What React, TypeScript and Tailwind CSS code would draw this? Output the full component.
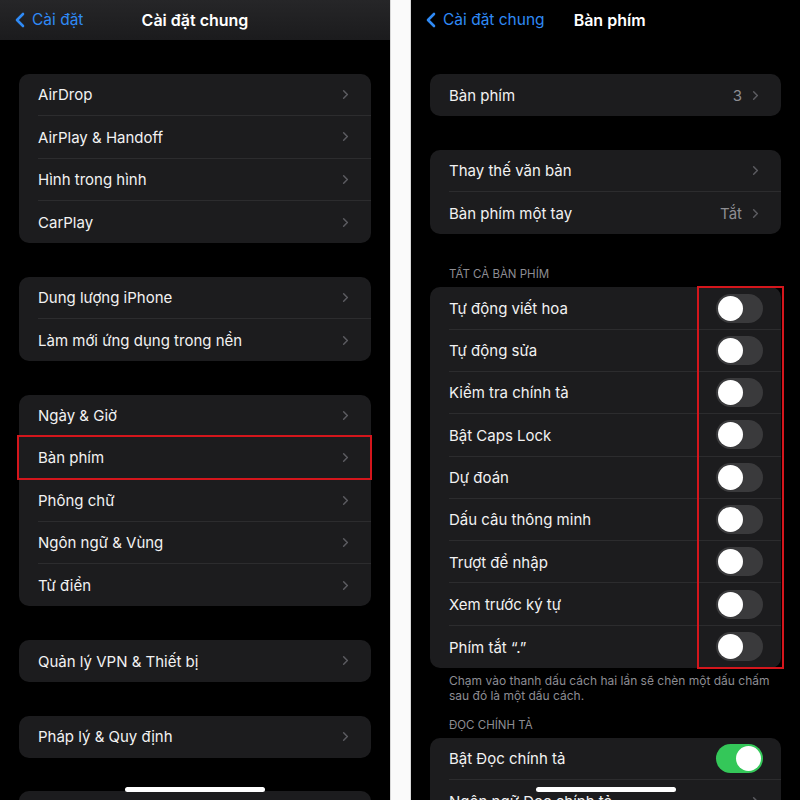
import { ChevronLeft, ChevronRight } from 'lucide-react';

type Row = { label: string; value?: string };

const leftGroups: Row[][] = [
  [{ label: 'AirDrop' }, { label: 'AirPlay & Handoff' }, { label: 'Hình trong hình' }, { label: 'CarPlay' }],
  [{ label: 'Dung lượng iPhone' }, { label: 'Làm mới ứng dụng trong nền' }],
  [
    { label: 'Ngày & Giờ' },
    { label: 'Bàn phím' },
    { label: 'Phông chữ' },
    { label: 'Ngôn ngữ & Vùng' },
    { label: 'Từ điển' },
  ],
  [{ label: 'Quản lý VPN & Thiết bị' }],
  [{ label: 'Pháp lý & Quy định' }],
  [{ label: 'Chuyển hoặc đặt lại iPhone' }],
];

const toggles = [
  'Tự động viết hoa',
  'Tự động sửa',
  'Kiểm tra chính tả',
  'Bật Caps Lock',
  'Dự đoán',
  'Dấu câu thông minh',
  'Trượt để nhập',
  'Xem trước ký tự',
  'Phím tắt “.”',
];

function Chevron() {
  return <ChevronRight size={15} strokeWidth={2.4} className="text-[#5b5b60] shrink-0" />;
}

function NavRow({ row, last }: { row: Row; last: boolean }) {
  return (
    <div className="h-[42.3px] pl-[19px] flex items-center">
      <div
        className={`flex-1 h-full flex items-center pr-[18px] ${last ? '' : 'border-b border-[#2c2c2e]'}`}
      >
        <span className="flex-1 pt-[2px] text-[15px] text-[#f2f2f2]">{row.label}</span>
        {row.value && <span className="pt-[2px] text-[15px] text-[#8e8e93] mr-[6px]">{row.value}</span>}
        <Chevron />
      </div>
    </div>
  );
}

function Toggle({ on }: { on: boolean }) {
  return (
    <div
      className={`w-[47px] h-[29px] rounded-full p-[2px] flex ${
        on ? 'bg-[#34c759] justify-end' : 'bg-[#3a3a3c] justify-start'
      }`}
    >
      <div className="w-[25px] h-[25px] rounded-full bg-white" />
    </div>
  );
}

function ToggleRow({ label, on, last }: { label: string; on: boolean; last: boolean }) {
  return (
    <div className="h-[42.3px] pl-[19px] flex items-center">
      <div
        className={`flex-1 h-full flex items-center pr-[18px] ${last ? '' : 'border-b border-[#2c2c2e]'}`}
      >
        <span className="flex-1 pt-[2px] text-[15px] text-[#f2f2f2]">{label}</span>
        <Toggle on={on} />
      </div>
    </div>
  );
}

function Card({ children }: { children: React.ReactNode }) {
  return <div className="bg-[#1c1c1e] rounded-[10px] overflow-hidden">{children}</div>;
}

function LeftPanel() {
  return (
    <div className="w-[390px] h-full bg-black flex flex-col overflow-hidden">
      <div className="h-[40px] shrink-0 bg-gradient-to-b from-[#262628] to-[#1b1b1d] flex items-center relative">
        <div className="flex items-center pl-[8px] text-[#2f8af5]">
          <ChevronLeft size={24} strokeWidth={2.6} />
          <span className="text-[15.5px]">Cài đặt</span>
        </div>
        <span className="absolute left-0 right-0 text-center text-[16px] font-semibold text-white pointer-events-none">
          Cài đặt chung
        </span>
      </div>
      <div className="pt-[34px] px-[19px] flex flex-col gap-[33.5px]">
        {leftGroups.map((g, gi) => (
          <Card key={gi}>
            {g.map((r, i) => (
              <NavRow key={r.label} row={r} last={i === g.length - 1} />
            ))}
          </Card>
        ))}
      </div>
    </div>
  );
}

function RightPanel() {
  return (
    <div className="flex-1 h-full bg-black flex flex-col overflow-hidden">
      <div className="h-[40px] shrink-0 flex items-center">
        <div className="flex items-center pl-[8px] text-[#2f8af5]">
          <ChevronLeft size={24} strokeWidth={2.6} />
          <span className="text-[15.5px]">Cài đặt chung</span>
        </div>
        <span className="ml-[29px] text-[16px] font-semibold text-white">Bàn phím</span>
      </div>
      <div className="pt-[34px] pl-[19px] pr-[19px] flex flex-col">
        <Card>
          <NavRow row={{ label: 'Bàn phím', value: '3' }} last />
        </Card>
        <div className="mt-[33.5px]">
          <Card>
            <NavRow row={{ label: 'Thay thế văn bản' }} last={false} />
            <NavRow row={{ label: 'Bàn phím một tay', value: 'Tắt' }} last />
          </Card>
        </div>
        <div className="mt-[33px] pl-[19px] pb-[6px] text-[11.5px] text-[#8d8d93] leading-[14px]">
          TẤT CẢ BÀN PHÍM
        </div>
        <Card>
          {toggles.map((t, i) => (
            <ToggleRow key={t} label={t} on={false} last={i === toggles.length - 1} />
          ))}
        </Card>
        <div className="pl-[19px] pt-[5px] text-[12px] leading-[15px] text-[#8d8d93] whitespace-nowrap">
          Chạm vào thanh dấu cách hai lần sẽ chèn một dấu chấm
          <br />
          sau đó là một dấu cách.
        </div>
        <div className="mt-[15px] pl-[19px] pb-[6px] text-[11.5px] text-[#8d8d93] leading-[14px]">
          ĐỌC CHÍNH TẢ
        </div>
        <Card>
          <ToggleRow label="Bật Đọc chính tả" on last={false} />
          <NavRow row={{ label: 'Ngôn ngữ Đọc chính tả' }} last />
        </Card>
      </div>
    </div>
  );
}

export default function App() {
  return (
    <div
      className="w-[800px] h-[800px] relative flex overflow-hidden bg-black"
      style={{ fontFamily: 'Inter, "Noto Sans", "Liberation Sans", sans-serif' }}
    >
      <LeftPanel />
      <div className="w-[21px] h-full bg-[#fafafa] border-x border-[#d8d8d8] shrink-0" />
      <RightPanel />

      {/* highlight boxes */}
      <div className="absolute left-[17px] top-[435px] w-[355px] h-[45px] border-2 border-[#d4161c] pointer-events-none" />
      <div className="absolute left-[697px] top-[286px] w-[87px] h-[383px] border-2 border-[#d4161c] pointer-events-none" />

      {/* home indicators */}
      <div className="absolute left-[125px] top-[787px] w-[140px] h-[5px] rounded-full bg-white" />
      <div className="absolute left-[536px] top-[787px] w-[140px] h-[5px] rounded-full bg-white" />
    </div>
  );
}
